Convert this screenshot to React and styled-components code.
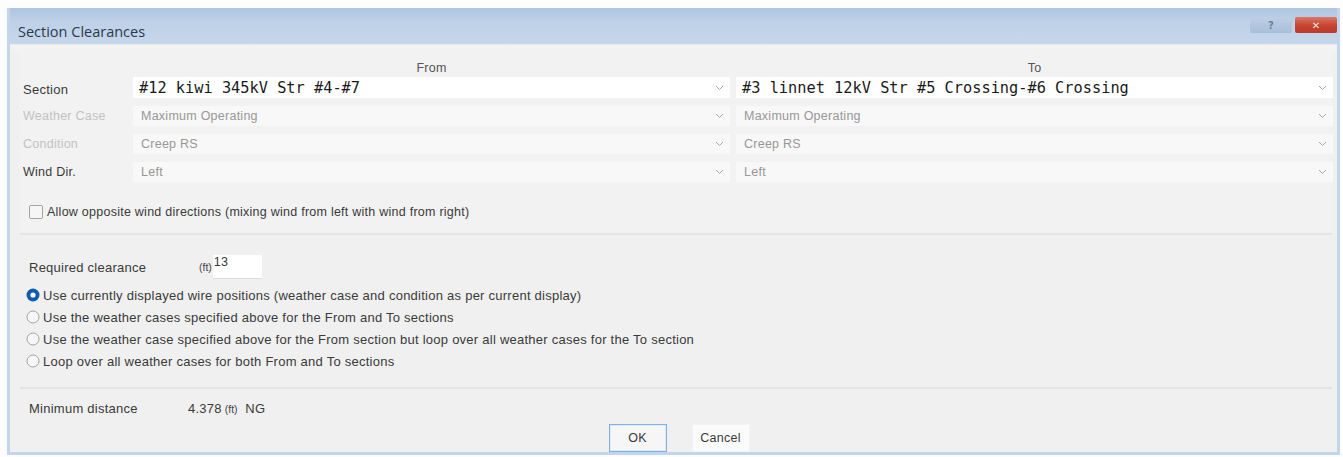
import React from "react"
import styled, { createGlobalStyle } from "styled-components"

const GlobalStyle = createGlobalStyle`
  html, body {
    margin: 0;
    padding: 0;
    background: #fdfdfd;
  }
  body {
    font-family: "Liberation Sans", Arial, sans-serif;
    font-size: 13px;
    letter-spacing: 0.25px;
    color: #3a3a3a;
  }
`

const Window = styled.div`
  width: 1333px;
  height: 447px;
  margin: 8px 0 0 7px;
  box-sizing: border-box;
  border-left: 3px solid #c3d5ea;
  border-right: 3px solid #c3d5ea;
  border-bottom: 3px solid #c3d5ea;
  display: flex;
  flex-direction: column;
  background: #f0f0f0;
  overflow: hidden;
`

const TitleBar = styled.div`
  height: 36px;
  flex: none;
  display: flex;
  align-items: flex-end;
  justify-content: space-between;
  padding: 0 0 3px 8px;
  box-sizing: border-box;
  background: linear-gradient(#aec5e0, #bed1e7 40%, #c6d7eb);
`

const Title = styled.span`
  font-family: "Open Sans", "Noto Sans", sans-serif;
  font-size: 14.5px;
  letter-spacing: 0;
  color: #2b3a4a;
`

const Caption = styled.div`
  display: flex;
  gap: 3px;
  align-self: flex-start;
  margin-top: 9px;
`

const CaptionButton = styled.div`
  width: 42px;
  height: 16px;
  display: flex;
  align-items: center;
  justify-content: center;
  background: ${(p) => (p.$close ? "linear-gradient(#dc7766, #c5432f 55%, #c0392a)" : "linear-gradient(#bccfe5, #a9bfd9)")};
  border-radius: 2px;
  color: ${(p) => (p.$close ? "#fbe7e3" : "#6b7f96")};
  font-family: "DejaVu Sans", sans-serif;
  font-size: 10px;
  font-weight: bold;
`

const Body = styled.div`
  flex: 1;
  display: flex;
  flex-direction: column;
  padding: 3px 0 0 0;
  border-top: 1px solid #e6e9ee;
  background: linear-gradient(#f6f4f0, #f0f0f0 8px);
`

const Group = styled.section`
  margin: 0 5px 0 10px;
  padding: ${(p) => p.$pad};
  border-bottom: ${(p) => (p.$last ? "none" : "2px solid #e4e4e4")};
  background: ${(p) => (p.$tint ? "#f2f2f2" : "transparent")};
`

const FieldGrid = styled.div`
  display: grid;
  grid-template-columns: 107px 597px 597px;
  column-gap: 6px;
  row-gap: 8px;
  align-items: center;
`

const ColumnHead = styled.div`
  text-align: center;
  font-size: 12.5px;
  color: #555;
  height: 14px;
  line-height: 14px;
  margin-bottom: -6px;
`

const Label = styled.div`
  font-size: ${(p) => (p.$mono ? "13px" : "12.5px")};
  color: ${(p) => (p.$disabled ? "#c2c2c2" : "#3a3a3a")};
  padding-left: 3px;
  padding-top: ${(p) => (p.$mono ? "3px" : "0")};
`

const Combo = styled.div`
  height: ${(p) => (p.$mono ? "21px" : "20px")};
  display: flex;
  align-items: center;
  justify-content: space-between;
  padding: 0 6px 0 6px;
  background: ${(p) => (p.$mono ? "#ffffff" : "#f8f8f8")};
`

const ComboText = styled.span`
  font-family: ${(p) => (p.$mono ? '"DejaVu Sans Mono", "Liberation Mono", monospace' : '"Liberation Sans", Arial, sans-serif')};
  font-size: ${(p) => (p.$mono ? "15.3px" : "12.5px")};
  letter-spacing: ${(p) => (p.$mono ? "0" : "0.25px")};
  color: ${(p) => (p.$mono ? "#1a1a1a" : "#979797")};
  padding-left: ${(p) => (p.$mono ? "0" : "2px")};
  white-space: nowrap;
`

const Chevron = () => (
  <svg width="9" height="6" viewBox="0 0 9 6">
    <path d="M1 1 L4.5 4.5 L8 1" fill="none" stroke="#a8a8a8" strokeWidth="1" />
  </svg>
)

const CheckRow = styled.label`
  display: flex;
  align-items: center;
  gap: 4px;
  margin: 23px 0 0 9px;
  font-size: 12.5px;
  color: #3a3a3a;
`

const Box = styled.span`
  width: 14px;
  height: 14px;
  box-sizing: border-box;
  border: 1px solid #a5a5a5;
  border-radius: 2px;
  background: #f6f6f6;
`

const ClearanceRow = styled.div`
  display: flex;
  align-items: center;
  height: 24px;
`

const ClearanceLabel = styled.span`
  width: 170px;
  padding-left: 3px;
  font-size: 13px;
`

const Unit = styled.span`
  font-size: 10.5px;
  letter-spacing: 0;
  color: #444;
`

const NumberBox = styled.div`
  width: 49px;
  height: 24px;
  margin-left: 1px;
  background: #ffffff;
  border-bottom: 1px solid #dcdcdc;
  font-size: 12.5px;
  line-height: 14px;
  padding-left: 1px;
  box-sizing: border-box;
`

const RadioList = styled.div`
  display: flex;
  flex-direction: column;
  gap: 6px;
  margin-top: 8px;
`

const RadioRow = styled.div`
  display: flex;
  align-items: center;
  gap: 3px;
  height: 16px;
  font-size: 13px;
  color: #3a3a3a;
`

const Radio = ({ on }) => (
  <svg width="14" height="14" viewBox="0 0 14 14">
    {on ? (
      <>
        <circle cx="7" cy="7" r="6.5" fill="#0d5cae" />
        <circle cx="7" cy="7" r="2.6" fill="#f4f8fc" />
      </>
    ) : (
      <circle cx="7" cy="7" r="6" fill="#f7f7f7" stroke="#a3a3a3" strokeWidth="1" />
    )}
  </svg>
)

const ResultRow = styled.div`
  display: flex;
  align-items: center;
  font-size: 13px;
`

const ResultLabel = styled.span`
  width: 159px;
  padding-left: 3px;
`

const Button = styled.button`
  width: 58px;
  height: 28px;
  box-sizing: border-box;
  font-family: "Liberation Sans", Arial, sans-serif;
  font-size: 12.5px;
  letter-spacing: 0.25px;
  color: #3a3a3a;
  background: ${(p) => (p.$primary ? "#f6f6f6" : "#fbfbfb")};
  border: 1px solid ${(p) => (p.$primary ? "#7fb1df" : "#f3f3f3")};
  box-shadow: ${(p) => (p.$primary ? "inset 0 0 0 1px #dcebf8" : "none")};
  padding: 0;
`

const Footer = styled.div`
  display: flex;
  justify-content: center;
  gap: 25px;
  margin-top: 8px;
`

const fields = [
  { label: "Weather Case", disabled: true, from: "Maximum Operating", to: "Maximum Operating" },
  { label: "Condition", disabled: true, from: "Creep RS", to: "Creep RS" },
  { label: "Wind Dir.", disabled: false, from: "Left", to: "Left" },
]

const modes = [
  "Use currently displayed wire positions (weather case and condition as per current display)",
  "Use the weather cases specified above for the From and To sections",
  "Use the weather case specified above for the From section but loop over all weather cases for the To section",
  "Loop over all weather cases for both From and To sections",
]

export default function App() {
  return (
    <>
      <GlobalStyle />
      <Window>
        <TitleBar>
          <Title>Section Clearances</Title>
          <Caption>
            <CaptionButton>?</CaptionButton>
            <CaptionButton $close>✕</CaptionButton>
          </Caption>
        </TitleBar>
        <Body>
          <Group $tint $pad="13px 0 14px 0">
            <FieldGrid>
              <div />
              <ColumnHead>From</ColumnHead>
              <ColumnHead>To</ColumnHead>

              <Label $mono>Section</Label>
              <Combo $mono>
                <ComboText $mono>#12 kiwi 345kV Str #4-#7</ComboText>
                <Chevron />
              </Combo>
              <Combo $mono>
                <ComboText $mono>#3 linnet 12kV Str #5 Crossing-#6 Crossing</ComboText>
                <Chevron />
              </Combo>

              {fields.map((f) => (
                <React.Fragment key={f.label}>
                  <Label $disabled={f.disabled}>{f.label}</Label>
                  <Combo>
                    <ComboText>{f.from}</ComboText>
                    <Chevron />
                  </Combo>
                  <Combo>
                    <ComboText>{f.to}</ComboText>
                    <Chevron />
                  </Combo>
                </React.Fragment>
              ))}
            </FieldGrid>
            <CheckRow>
              <Box />
              Allow opposite wind directions (mixing wind from left with wind from right)
            </CheckRow>
          </Group>

          <Group $pad="20px 0 18px 6px">
            <ClearanceRow>
              <ClearanceLabel>Required clearance</ClearanceLabel>
              <Unit>(ft)</Unit>
              <NumberBox>13</NumberBox>
            </ClearanceRow>
            <RadioList>
              {modes.map((m, i) => (
                <RadioRow key={m}>
                  <Radio on={i === 0} />
                  {m}
                </RadioRow>
              ))}
            </RadioList>
          </Group>

          <Group $last $pad="12px 0 0 6px">
            <ResultRow>
              <ResultLabel>Minimum distance</ResultLabel>
              4.378 <Unit>&nbsp;(ft)</Unit>&nbsp; NG
            </ResultRow>
            <Footer>
              <Button $primary>OK</Button>
              <Button>Cancel</Button>
            </Footer>
          </Group>
        </Body>
      </Window>
    </>
  )
}
